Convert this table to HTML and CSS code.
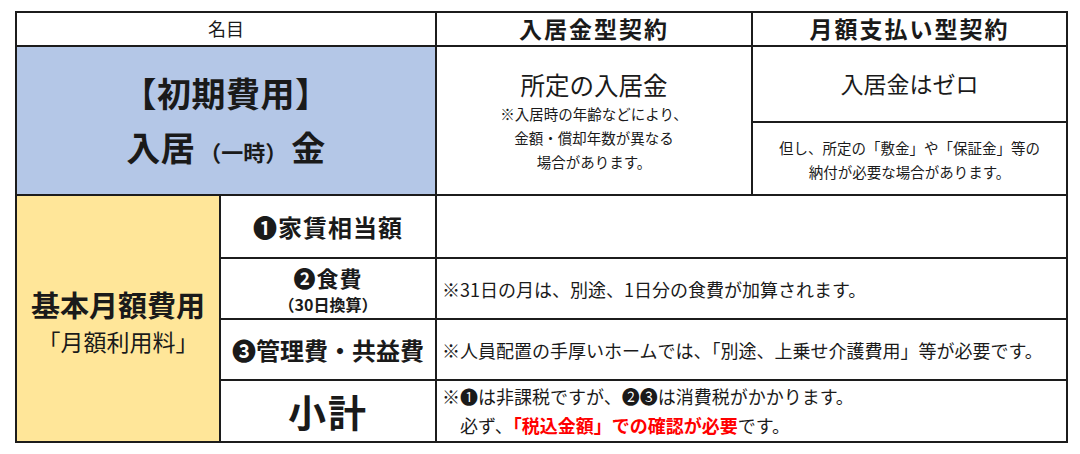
FILE: index.html
```html
<!DOCTYPE html>
<html lang="ja">
<head>
<meta charset="utf-8">
<link rel="stylesheet" href="styles.css">
</head>
<body>
<div class="table">
  <div class="cell head name">名目</div>
  <div class="cell head bold">入居金型契約</div>
  <div class="cell head bold">月額支払い型契約</div>

  <div class="cell blue">
    <div class="big">【初期費用】</div>
    <div class="big">入居<span class="paren">（一時）</span>金</div>
  </div>
  <div class="cell initA">
    <div class="lead leadA">所定の入居金</div>
    <div class="note">※入居時の年齢などにより、</div>
    <div class="note">金額・償却年数が異なる</div>
    <div class="note">場合があります。</div>
  </div>
  <div class="initB">
    <div class="cell subTop"><div class="lead">入居金はゼロ</div></div>
    <div class="cell subBottom">
      <div class="note">但し、所定の「敷金」や「保証金」等の</div>
      <div class="note">納付が必要な場合があります。</div>
    </div>
  </div>

  <div class="cell yellow">
    <div class="ytitle">基本月額費用</div>
    <div class="ysub">「月額利用料」</div>
  </div>

  <div class="cell item r3 wide">❶家賃相当額</div>
  <div class="cell desc r3"></div>

  <div class="cell item r4">
    <div class="wide food">❷食費</div>
    <div class="small">（30日換算）</div>
  </div>
  <div class="cell desc r4">※31日の月は、別途、1日分の食費が加算されます。</div>

  <div class="cell item r5">❸管理費・共益費</div>
  <div class="cell desc r5">※人員配置の手厚いホームでは、「別途、上乗せ介護費用」等が必要です。</div>

  <div class="cell item r6 total">小計</div>
  <div class="cell desc r6 two">
    <div>※❶は非課税ですが、❷❸は消費税がかかります。</div>
    <div class="indent">必ず、<span class="red">「税込金額」での確認が必要</span>です。</div>
  </div>
</div>
</body>
</html>
```

FILE: styles.css
```css
html, body {
  margin: 0;
  padding: 0;
  background: #ffffff;
}

body {
  font-family: "Noto Sans CJK JP", "Noto Sans", sans-serif;
  color: #1a1a1a;
}

.table {
  display: grid;
  grid-template-columns: 202px 214px 314px 313px;
  grid-template-rows: 32px 147px 61px 59px 59px 60px;
  gap: 2px;
  padding: 2px;
  background: #1c1c1c;
  width: max-content;
  margin: 11px 0 0 15px;
}

.cell {
  background: #ffffff;
  display: flex;
  flex-direction: column;
  align-items: center;
  justify-content: center;
  text-align: center;
  line-height: 1.2;
}

.head {
  font-size: 23px;
}

.head.name {
  grid-column: 1 / 3;
  font-size: 18px;
}

.bold {
  font-weight: 700;
  letter-spacing: 2px;
}

.blue {
  grid-column: 1 / 3;
  background: #b4c7e7;
  gap: 4px;
  padding-top: 2px;
}

.big {
  font-size: 34px;
  font-weight: 700;
  line-height: 50px;
  letter-spacing: 0.5px;
}

.paren {
  font-size: 22px;
  letter-spacing: 0;
  margin: 0 4px;
}

.initA {
  padding-top: 2px;
}

.lead {
  font-size: 23px;
  line-height: 30px;
  margin-bottom: 2px;
}

.leadA {
  font-size: 24.5px;
}

.note {
  font-size: 14.5px;
  line-height: 24px;
}

.initB {
  display: flex;
  flex-direction: column;
  gap: 2px;
}

.subTop {
  height: 74px;
}

.subBottom {
  flex: 1;
  padding-top: 2px;
}

.yellow {
  grid-row: 3 / 7;
  background: #ffe699;
  gap: 4px;
  padding-top: 4px;
}

.ytitle {
  font-size: 29px;
  font-weight: 700;
  line-height: 36px;
}

.ysub {
  font-size: 23px;
  line-height: 30px;
}

.item {
  grid-column: 2;
  font-size: 24px;
  font-weight: 700;
  line-height: 30px;
}

.item .wide,
.item.wide {
  letter-spacing: 1px;
}

.item .food {
  font-size: 22px;
  line-height: 32px;
}

.item .small {
  font-size: 16px;
  line-height: 23px;
}

.item.total {
  font-size: 38px;
  line-height: 44px;
  letter-spacing: 2px;
}

.r3 { grid-row: 3; }
.r4 { grid-row: 4; }
.r5 { grid-row: 5; }
.r6 { grid-row: 6; }

.desc {
  grid-column: 3 / 5;
  align-items: flex-start;
  text-align: left;
  padding-left: 5px;
  font-size: 18px;
  line-height: 28px;
}

.desc.two {
  line-height: 29px;
  padding-top: 0;
}

.indent {
  padding-left: 18px;
}

.red {
  color: #ff0000;
  font-weight: 700;
}
```
